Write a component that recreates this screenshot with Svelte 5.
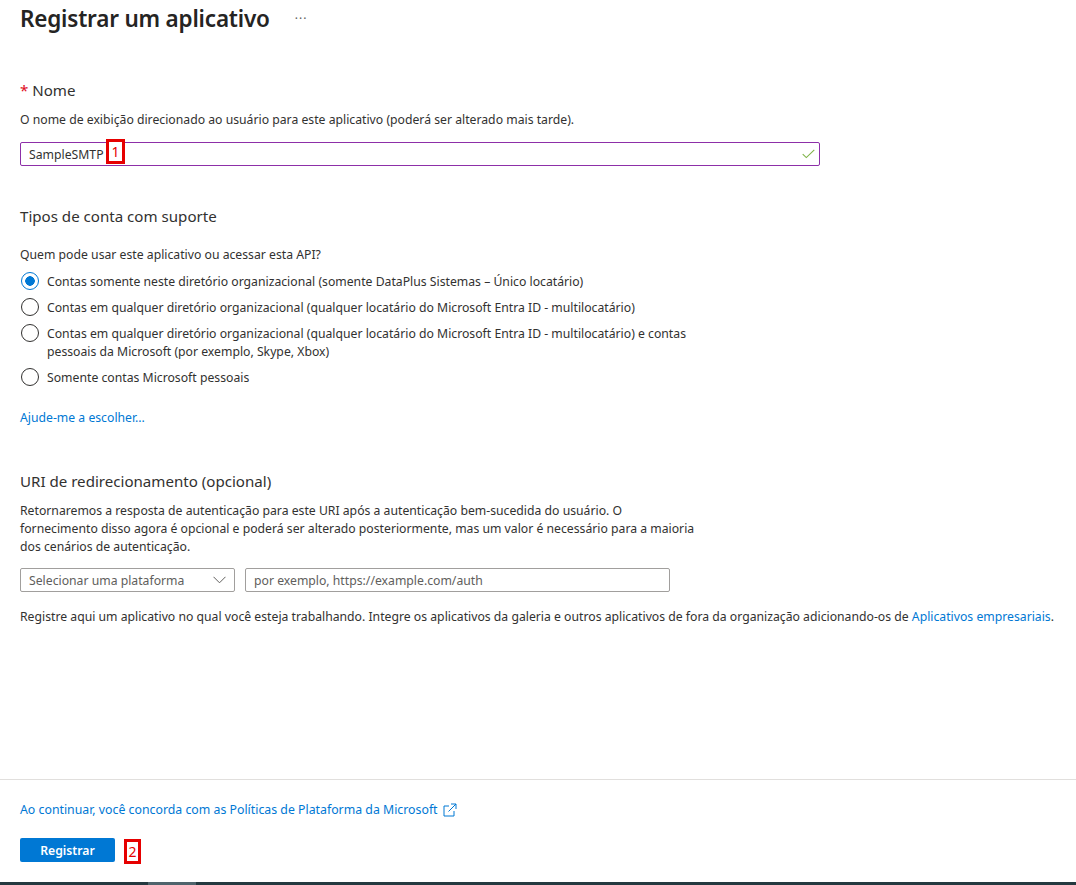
<script lang="ts">
  const accounts = [
    { label: 'Contas somente neste diretório organizacional (somente DataPlus Sistemas – Único locatário)' },
    { label: 'Contas em qualquer diretório organizacional (qualquer locatário do Microsoft Entra ID - multilocatário)' },
    { label: 'Contas em qualquer diretório organizacional (qualquer locatário do Microsoft Entra ID - multilocatário) e contas pessoais da Microsoft (por exemplo, Skype, Xbox)' },
    { label: 'Somente contas Microsoft pessoais' },
  ];

  let selected = $state(0);
  let name = $state('SampleSMTP');
</script>

<div class="page">
  <main class="content">
    <header class="title-row">
      <h1>Registrar um aplicativo</h1>
      <span class="more">···</span>
    </header>

    <section class="name-section">
      <h2><span class="req">*</span> Nome</h2>
      <p class="hint">O nome de exibição direcionado ao usuário para este aplicativo (poderá ser alterado mais tarde).</p>
      <div class="name-field">
        <input class="name-input" bind:value={name} aria-label="Nome" />
        <span class="marker marker-one">1</span>
        <svg class="check" width="13" height="10" viewBox="0 0 13 10" aria-hidden="true">
          <path d="M.7 5.2 4.3 8.6 12.3 .8" fill="none" stroke="#7fb348" stroke-width="1.1" />
        </svg>
      </div>
    </section>

    <section class="account-section">
      <h2>Tipos de conta com suporte</h2>
      <p class="question">Quem pode usar este aplicativo ou acessar esta API?</p>
      <div class="radios">
        {#each accounts as item, i}
          <label class="radio">
            <input class="radio-dot" type="radio" name="account" checked={selected === i} onchange={() => (selected = i)} />
            <span>{item.label}</span>
          </label>
        {/each}
      </div>
      <a class="link help" href="#help">Ajude-me a escolher...</a>
    </section>

    <section class="uri-section">
      <h2>URI de redirecionamento (opcional)</h2>
      <p class="uri-text">Retornaremos a resposta de autenticação para este URI após a autenticação bem-sucedida do usuário. O fornecimento disso agora é opcional e poderá ser alterado posteriormente, mas um valor é necessário para a maioria dos cenários de autenticação.</p>
      <div class="uri-row">
        <div class="select">
          <span>Selecionar uma plataforma</span>
          <svg width="13" height="8" viewBox="0 0 13 8" aria-hidden="true">
            <path d="M.5.8 6.5 6.8 12.5.8" fill="none" stroke="#605e5c" stroke-width="1" />
          </svg>
        </div>
        <input class="uri-input" placeholder="por exemplo, https://example.com/auth" aria-label="URI" />
      </div>
      <p class="gallery">Registre aqui um aplicativo no qual você esteja trabalhando. Integre os aplicativos da galeria e outros aplicativos de fora da organização adicionando-os de <a class="link" href="#apps">Aplicativos empresariais</a>.</p>
    </section>
  </main>

  <footer class="footer">
    <a class="link policy" href="#policy">
      Ao continuar, você concorda com as Políticas de Plataforma da Microsoft
      <svg width="14" height="14" viewBox="0 0 14 14" aria-hidden="true">
        <path d="M6 3H1v10h10V8M8 1h5v5M13 1 5.500 8.500" fill="none" stroke="#0078d4" stroke-width="1" />
      </svg>
    </a>
    <div class="actions">
      <button class="primary" type="button">Registrar</button>
      <span class="marker marker-two">2</span>
    </div>
  </footer>

  <div class="taskbar"><span class="thumb"></span></div>
</div>

<style>
  :global(body) {
    margin: 0;
    background: #fff;
  }

  .page {
    display: flex;
    flex-direction: column;
    height: 885px;
    overflow: hidden;
    font-family: "Noto Sans", "Open Sans", sans-serif;
    font-size: 12.22px;
    color: #323130;
  }

  .content {
    flex: 1;
    min-height: 0;
    padding: 0 0 0 20px;
  }

  .title-row {
    display: flex;
    align-items: center;
    height: 34px;
    margin-top: 1px;
  }

  h1 {
    margin: 0;
    font-size: 22.5px;
    font-weight: 600;
    color: #252423;
    letter-spacing: -0.2px;
  }

  .more {
    margin-left: 25px;
    font-size: 12px;
    letter-spacing: 1px;
    color: #605e5c;
  }

  h2 {
    margin: 0;
    font-size: 15.1px;
    font-weight: 400;
    line-height: 20px;
    color: #323130;
  }

  .req {
    color: #e00b1c;
  }

  .name-section {
    margin-top: 45px;
  }

  .hint {
    margin: 11px 0 13px;
    line-height: 18px;
  }

  .name-field {
    position: relative;
    width: 800px;
  }

  .name-input {
    display: block;
    box-sizing: border-box;
    width: 100%;
    height: 24px;
    padding: 0 8px;
    border: 1px solid #8d2fa8;
    border-radius: 2px;
    outline: none;
    font: inherit;
    color: #323130;
  }

  .check {
    position: absolute;
    right: 5px;
    top: 7px;
  }

  .marker {
    box-sizing: border-box;
    border: 3px solid #e60000;
    background: #fff;
    color: #e60000;
    font-size: 14px;
    line-height: 19px;
    text-align: center;
  }

  .marker-one {
    position: absolute;
    left: 86px;
    top: -3px;
    width: 19px;
    height: 25px;
  }

  .account-section {
    margin-top: 40px;
  }

  .question {
    margin: 20px 0 0;
    line-height: 18px;
  }

  .radios {
    display: flex;
    flex-direction: column;
    gap: 8px;
    width: 680px;
    margin-top: 9px;
  }

  .radio {
    display: flex;
    align-items: flex-start;
    gap: 8px;
    line-height: 18px;
  }

  .radio-dot {
    appearance: none;
    flex: none;
    box-sizing: border-box;
    width: 18px;
    height: 18px;
    margin: -1px 0 0 1px;
    border: 1px solid #323130;
    border-radius: 50%;
    background: #fff;
  }

  .radio-dot:checked {
    border-color: #0078d4;
    background: radial-gradient(circle, #0078d4 0 4.5px, #fff 5px);
  }

  .link {
    color: #0078d4;
    text-decoration: none;
  }

  .help {
    display: block;
    margin-top: 22px;
    line-height: 18px;
  }

  .uri-section {
    margin-top: 44px;
  }

  .uri-text {
    width: 679px;
    margin: 11px 0 0;
    line-height: 18px;
  }

  .uri-row {
    display: flex;
    gap: 10px;
    margin-top: 12px;
  }

  .select {
    display: flex;
    align-items: center;
    justify-content: space-between;
    box-sizing: border-box;
    width: 215px;
    height: 24px;
    padding: 0 8px;
    border: 1px solid #a19f9d;
    border-radius: 2px;
    color: #605e5c;
  }

  .uri-input {
    box-sizing: border-box;
    width: 425px;
    height: 24px;
    padding: 0 8px;
    border: 1px solid #a19f9d;
    border-radius: 2px;
    outline: none;
    font: inherit;
  }

  .uri-input::placeholder {
    color: #605e5c;
    opacity: 1;
  }

  .gallery {
    margin: 16px 0 0;
    line-height: 18px;
    white-space: nowrap;
  }

  .footer {
    flex: none;
    height: 103px;
    padding-left: 20px;
    border-top: 1px solid #e1dfdd;
    box-sizing: border-box;
  }

  .policy {
    display: flex;
    align-items: center;
    gap: 5px;
    margin-top: 21px;
    line-height: 18px;
    font-size: 12.32px;
  }

  .actions {
    display: flex;
    align-items: flex-start;
    gap: 9px;
    margin-top: 19px;
  }

  .primary {
    width: 95px;
    height: 24px;
    padding: 0;
    border: 0;
    border-radius: 2px;
    background: #0078d4;
    color: #fff;
    font: inherit;
    font-weight: 600;
  }

  .marker-two {
    width: 17px;
    height: 25px;
    margin-top: 1px;
  }

  .taskbar {
    flex: none;
    height: 3px;
    background: #24393f;
  }

  .thumb {
    display: block;
    width: 48px;
    height: 3px;
    margin-left: 148px;
    background: #4f646c;
  }
</style>
